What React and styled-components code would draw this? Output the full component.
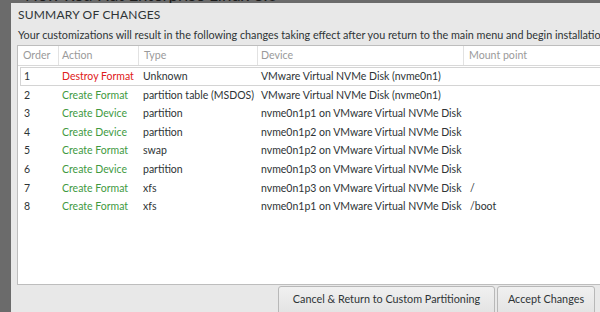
import React from 'react';
import styled, { createGlobalStyle } from 'styled-components';

const rows = [
  { order: 1, action: 'Destroy Format', destroy: true, type: 'Unknown', device: 'VMware Virtual NVMe Disk (nvme0n1)', mount: '' },
  { order: 2, action: 'Create Format', type: 'partition table (MSDOS)', device: 'VMware Virtual NVMe Disk (nvme0n1)', mount: '' },
  { order: 3, action: 'Create Device', type: 'partition', device: 'nvme0n1p1 on VMware Virtual NVMe Disk', mount: '' },
  { order: 4, action: 'Create Device', type: 'partition', device: 'nvme0n1p2 on VMware Virtual NVMe Disk', mount: '' },
  { order: 5, action: 'Create Format', type: 'swap', device: 'nvme0n1p2 on VMware Virtual NVMe Disk', mount: '' },
  { order: 6, action: 'Create Device', type: 'partition', device: 'nvme0n1p3 on VMware Virtual NVMe Disk', mount: '' },
  { order: 7, action: 'Create Format', type: 'xfs', device: 'nvme0n1p3 on VMware Virtual NVMe Disk', mount: '/' },
  { order: 8, action: 'Create Format', type: 'xfs', device: 'nvme0n1p1 on VMware Virtual NVMe Disk', mount: '/boot' },
];

const font = '"Lato", "DejaVu Sans", sans-serif';

const GlobalStyle = createGlobalStyle`
  html, body {
    margin: 0;
    padding: 0;
    background: #6b6b6b;
    overflow: hidden;
  }
  body {
    font-family: ${font};
  }
`;

const Screen = styled.div`
  width: 600px;
  height: 312px;
  overflow: hidden;
  background: #6b6b6b;
`;

const BehindTitle = styled.div`
  height: 3px;
  overflow: hidden;
  padding-left: 25px;
`;

const BehindText = styled.div`
  margin-top: -15px;
  font-size: 17px;
  line-height: 19px;
  color: #1c1c1c;
  white-space: nowrap;
`;

const Dialog = styled.div`
  margin-left: 11px;
  height: 309px;
  background: #e8e8e8;
  overflow: hidden;
  padding: 4px 0 0 6px;
  box-sizing: border-box;
  display: flex;
  flex-direction: column;
`;

const Title = styled.div`
  font-size: 12px;
  line-height: 16px;
  color: #2e3436;
  padding-left: 1px;
  letter-spacing: 0.2px;
  white-space: nowrap;
`;

const Subtitle = styled.div`
  margin-top: 4px;
  font-size: 10.8px;
  line-height: 16px;
  color: #2e3436;
  padding-left: 1px;
  white-space: nowrap;
`;

const Table = styled.div`
  margin-top: 2px;
  height: 240px;
  width: 620px;
  background: #fff;
  border: 1px solid #bdbdbd;
  border-right: none;
  box-sizing: border-box;
  flex-shrink: 0;
`;

const cols = '40px 80px 119px 206px 1fr';

const HeadRow = styled.div`
  display: grid;
  grid-template-columns: ${cols};
  height: 19px;
  border-bottom: 1px solid #d8d8d8;
`;

const HeadCell = styled.div`
  font-size: 10.6px;
  line-height: 19px;
  color: #9a9a9a;
  padding-left: ${(p) => p.$pad || 4}px;
  border-left: ${(p) => (p.$first ? 'none' : '1px solid #e2e2e2')};
  white-space: nowrap;
`;

const Rows = styled.div`
  padding-top: 1px;
`;

const Row = styled.div`
  display: grid;
  grid-template-columns: ${cols};
  height: 18.6px;
  margin-left: 2px;
  box-sizing: border-box;
  border: 1px solid ${(p) => (p.$focused ? '#d4d4d4' : 'transparent')};
  border-right: none;
`;

const Cell = styled.div`
  font-size: 10.5px;
  line-height: 16.6px;
  color: ${(p) => p.$color || '#2e3436'};
  padding-left: ${(p) => p.$pad || 3}px;
  white-space: nowrap;
`;

const Footer = styled.div`
  display: flex;
  justify-content: flex-end;
  gap: 2px;
  padding-right: 5px;
  margin-top: 1px;
`;

const Button = styled.button`
  width: ${(p) => p.$w}px;
  height: 30px;
  font-family: ${font};
  font-size: 10.8px;
  color: #2e3436;
  background: linear-gradient(#f0f0f0, #e2e2e2);
  border: 1px solid #b8b8b8;
  border-radius: 3px;
  padding: 0 0 6px;
  cursor: pointer;
`;

export default function App() {
  return (
    <Screen>
      <GlobalStyle />
      <BehindTitle>
        <BehindText>New Red Hat Enterprise Linux 8.0</BehindText>
      </BehindTitle>
      <Dialog>
        <Title>SUMMARY OF CHANGES</Title>
        <Subtitle>
          Your customizations will result in the following changes taking effect after you return to the main menu and begin installation:
        </Subtitle>
        <Table>
          <HeadRow>
            <HeadCell $first $pad={5}>Order</HeadCell>
            <HeadCell $pad={3}>Action</HeadCell>
            <HeadCell $pad={5}>Type</HeadCell>
            <HeadCell $pad={3}>Device</HeadCell>
            <HeadCell $pad={5}>Mount point</HeadCell>
          </HeadRow>
          <Rows>
            {rows.map((r, i) => (
              <Row key={r.order} $focused={i === 0}>
                <Cell $pad={3}>{r.order}</Cell>
                <Cell $color={r.destroy ? '#e02020' : '#3f9a3f'} $pad={1}>{r.action}</Cell>
                <Cell $pad={2}>{r.type}</Cell>
                <Cell $pad={1}>{r.device}</Cell>
                <Cell $pad={4}>{r.mount}</Cell>
              </Row>
            ))}
          </Rows>
        </Table>
        <Footer>
          <Button $w={217}>Cancel &amp; Return to Custom Partitioning</Button>
          <Button $w={98}>Accept Changes</Button>
        </Footer>
      </Dialog>
    </Screen>
  );
}
